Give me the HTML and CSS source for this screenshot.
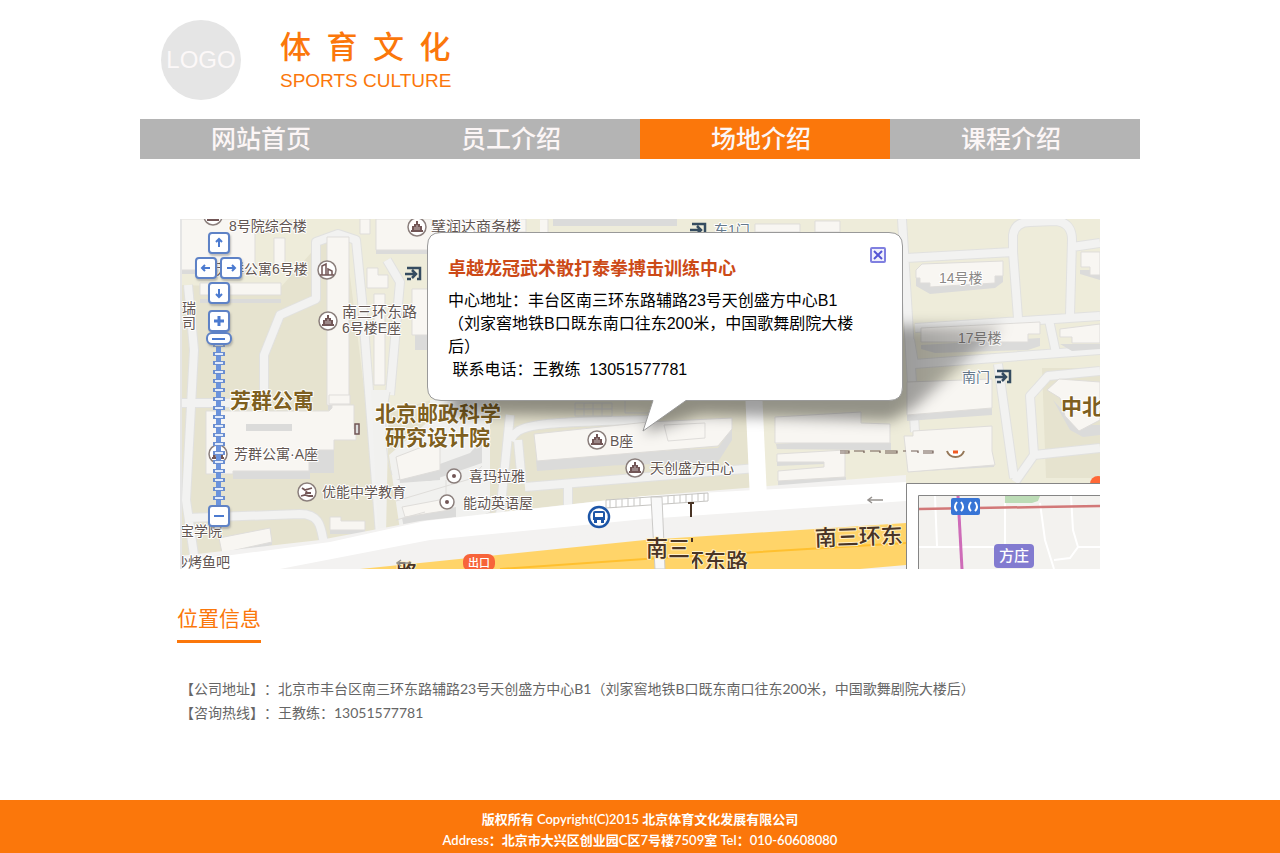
FILE: index.html
```html
<!DOCTYPE html>
<html lang="zh-CN">
<head>
<meta charset="utf-8">
<meta name="viewport" content="width=device-width, initial-scale=1">
<title>场地介绍 - 体育文化</title>
<link rel="stylesheet" href="styles.css">
</head>
<body>
<div class="container">
  <header class="header">
    <div class="logo">LOGO</div>
    <div class="brand">
      <h1 class="brand-name">体&ensp;育&ensp;文&ensp;化</h1>
      <p class="brand-sub">SPORTS CULTURE</p>
    </div>
  </header>
  <nav class="nav">
    <a class="nav-link" href="#">网站首页</a>
    <a class="nav-link" href="#">员工介绍</a>
    <a class="nav-link active" href="#" aria-current="page">场地介绍</a>
    <a class="nav-link" href="#">课程介绍</a>
  </nav>
  <main class="main">
    <section class="map">
      <svg class="map-canvas" viewBox="180 219 920 350" preserveAspectRatio="xMinYMin slice" aria-label="地图">
        <defs>
          <filter id="soft" x="-10%" y="-50%" width="120%" height="200%"><feGaussianBlur stdDeviation="7"/></filter>
          <linearGradient id="shade" x1="0" y1="0" x2="1" y2="0"><stop offset="0" stop-opacity=".38"/><stop offset=".8" stop-opacity=".38"/><stop offset="1" stop-opacity=".2"/></linearGradient>
          <clipPath id="tile"><rect x="692" y="545" width="80" height="30"/></clipPath>
          <g id="tower">
            <circle r="9" fill="#fff" stroke="#8b7f7c" stroke-width="1.5"/>
            <path d="M-6 5H6V3H5V-1H3V-3H1V-6H-1V-3H-3V-1H-5V3H-6Z" fill="#725656"/>
            <path d="M-2 0V3M0-2V3M2 0V3" stroke="#fff" stroke-width=".6"/>
          </g>
          <g id="spot"><circle r="7" fill="#fff" stroke="#8b7f7c" stroke-width="1.5"/><circle r="2" fill="#725656"/></g>
          <g id="gate" fill="none" stroke="#354c60" stroke-width="2.5"><path d="M-6-5H7V6H4M-8 1H2M-1-3L3 1L-1 5M-6 6H-2"/></g>
        </defs>
        <rect x="180" y="219" width="920" height="350" fill="#eeecda"/>
        <path d="M180 285L280 288L318 245L345 236L368 420L430 400H755L757 500L180 569Z" fill="#e6e3cf"/>
        <path d="M1042 368H1100V478H1046Z" fill="#e6e3cf"/>

        <g fill="none" stroke="#e1e1df" stroke-width="10" stroke-linejoin="round">
          <path d="M264 400V355L280 315L316 299V242L338 234L356 240L362 300L380 535"/>
          <path d="M387 260L400 282L390 395M180 403H250"/>
          <path d="M188 285L194 350L186 500L196 569M187 518L300 514C325 514 320 535 326 550"/>
          <path d="M510 415L498 535M510 440C518 425 530 422 650 420M518 440L522 484M525 487L757 468M568 486V520"/>
          <path d="M902 219L915 432M906 258L1013 252M915 328L1100 316M1013 252V235Q1015 222 1030 222L1055 221Q1072 222 1072 240L1070 315M1013 252L1018 318M1072 247L1100 243"/>
          <path d="M910 340L914 364L1100 350M1049 320L1056 353M998 364L1014 478M1100 371L1048 376L1030 396L1034 455L1015 482M1034 455L1100 448"/>
        </g>
        <g fill="none" stroke="#f2f2f1" stroke-width="8" stroke-linejoin="round">
          <path d="M264 400V355L280 315L316 299V242L338 234L356 240L362 300L380 535"/>
          <path d="M387 260L400 282L390 395M180 403H250"/>
          <path d="M188 285L194 350L186 500L196 569M187 518L300 514C325 514 320 535 326 550"/>
          <path d="M510 415L498 535M510 440C518 425 530 422 650 420M518 440L522 484M525 487L757 468M568 486V520"/>
          <path d="M902 219L915 432M906 258L1013 252M915 328L1100 316M1013 252V235Q1015 222 1030 222L1055 221Q1072 222 1072 240L1070 315M1013 252L1018 318M1072 247L1100 243"/>
          <path d="M910 340L914 364L1100 350M1049 320L1056 353M998 364L1014 478M1100 371L1048 376L1030 396L1034 455L1015 482M1034 455L1100 448"/>
        </g>
        <path d="M371 390L389 390L386 534L378 535ZM389 455L430 420V400H490V520L400 530Z" fill="#f1f1ef"/>
        <path d="M392 475C384 450 384 420 390 392" fill="none" stroke="#e1e1df"/>

        <g fill="#dbdbda">
          <path d="M182 225H254V274H182ZM376 230H430V254H376ZM200 303H281V299H200ZM206 445H334V473H206ZM233 470H310V479H233ZM328 410H350V405H328Z"/>
          <path d="M398 468L440 450V480L400 483ZM402 518L456 507V517L404 528ZM330 530H365V534H330ZM220 553L272 541V545L222 558ZM415 335H430V350H415Z"/>
          <path d="M396 480L470 453L482 440V463L430 481ZM536 460L690 449V460L537 471ZM596 455L718 448L732 428V440L718 462L596 466Z"/>
          <path d="M776 444L862 439L891 443V450L862 450L777 449ZM777 462L824 458V464L777 466ZM778 481L846 477V483L778 487Z"/>
          <path d="M916 278L1003 274V282L995 288L930 294L916 286ZM921 345L1040 338V346L1028 350L935 353L921 349ZM1060 344H1100V349L1072 351ZM1080 270H1100V280L1080 274Z"/>
          <path d="M907 415L992 408V415L907 421ZM908 462L994 457V467L908 472ZM1053 400L1070 430L1083 437L1100 435V425H1080L1072 420Z"/>
        </g>
        <g fill="#f8f6f2" stroke="#dfddda" stroke-width="1">
          <path d="M180 219H255V270H180ZM274 238H285V266H274ZM540 219H548V234H540M360 219H370V234H360ZM376 219H520V250H376ZM327 237H349V405H327ZM367 268H378V275H388V288H367ZM374 294H385V385H374ZM412 289H430V335H412ZM200 283H281V295H200Z"/>
          <path d="M206 411H329L332 408V405H354V429H356V440H334V450H309V471H233V474H206ZM329 395H350V404H329ZM396 457L440 440V470L400 480ZM402 507L450 498V510L405 517ZM330 517H341V521H365V530H330ZM219 538L270 528L272 542L222 553Z"/>
          <path d="M534 434L648 422L732 418V429L718 446L537 461ZM775 417L861 412V423L890 424V443L775 443ZM777 454L845 450V477L778 481V471L824 467V462H777Z"/>
          <path d="M916 270L922 264L1003 261V276H995V283L930 287V283H920V278H916ZM921 328L1040 322V334H1028V342H935V342H921ZM1060 329L1100 324V343H1072V337H1060ZM1081 252H1100V275H1090V267H1081Z"/>
          <path d="M907 382L992 379V408L907 415ZM904 436H913V431L992 426V451L995 465L908 472ZM1047 390L1059 379L1100 382V420L1079 431L1065 416L1060 398ZM432 219H526V232H432ZM755 224H800V232H755ZM815 221H840V232H815Z"/>
          <path d="M446 480V495M396 501L470 479L482 466M396 520L425 512M400 550L520 500M664 425L705 423V438L668 441Z" fill="none"/>
        </g>
        <path d="M246 424H292V431H246ZM553 219H677V226H553Z" fill="#dbdbda"/>

        <path d="M180 569V556L320 540L420 521L645 496L906 475V569Z" fill="#f3f2f1"/>
        <path d="M180 569V562L330 542L425 521L645 496L906 482V501L645 519L430 540L280 569Z" fill="#fff"/>
        <path d="M300 569L400 552L645 530L906 510V518L645 535L430 553L350 569Z" fill="#f3f2f1"/>
        <path d="M745 390H762L767 498L750 500Z" fill="#fff"/>
        <path d="M360 569L430 562L645 540L906 523V565L860 569Z" fill="#ffd469"/>
        <path d="M500 569L645 559L906 543" fill="none" stroke="#ffc02f" stroke-width="2"/>
        <path d="M606 505V500L708 493V501L606 508Z" fill="#fff" stroke="#c6c5c2"/>
        <path d="M610 500V508M616 500V508M622 499V507M628 499V507M634 498V506M640 498V506M668 496V504M674 495V503M680 495V503M686 494V502M692 494V502M698 493V501M704 493V501" stroke="#c6c5c2"/>
        <path d="M651 497H662L665 569H655Z" fill="#f8f8f8" stroke="#cbcac8"/>
        <path d="M575 403H612V416H575ZM625 400H665V413H625ZM575 409H612M584 403V416M593 403V416M602 403V416" fill="none" stroke="#d6d6d4"/>

        <g class="map-label">
          <text x="229" y="231" font-size="14">8号院综合楼</text>
          <text x="216" y="274" font-size="14">芳群公寓6号楼</text>
          <text x="431" y="232" font-size="15">擘润达商务楼</text>
          <text x="342" y="317" font-size="15">南三环东路</text>
          <text x="342" y="333" font-size="14">6号楼E座</text>
          <text x="182" y="313" font-size="14">瑞</text>
          <text x="182" y="328" font-size="14">司</text>
          <text x="234" y="459" font-size="14">芳群公寓·A座</text>
          <text x="322" y="497" font-size="14">优能中学教育</text>
          <text x="180" y="536" font-size="14">宝学院</text>
          <text x="174" y="567" font-size="14">沙烤鱼吧</text>
          <text x="469" y="481" font-size="14">喜玛拉雅</text>
          <text x="463" y="508" font-size="14">能动英语屋</text>
          <text x="610" y="446" font-size="14">B座</text>
          <text x="650" y="473" font-size="14">天创盛方中心</text>
          <text x="939" y="283" font-size="14" class="pale">14号楼</text>
          <text x="958" y="343" font-size="14" class="pale">17号楼</text>
          <text x="962" y="382" font-size="14" class="gate-label">南门</text>
          <text x="714" y="235" font-size="14" class="gate-label">东1门</text>
        </g>
        <g class="map-area">
          <text x="230" y="408" font-size="21">芳群公寓</text>
          <text x="375" y="421" font-size="21">北京邮政科学</text>
          <text x="385" y="445" font-size="21">研究设计院</text>
          <text x="1061" y="414" font-size="21">中北</text>
        </g>
        <g class="map-road">
          <text x="815" y="546" font-size="22" transform="rotate(-2 815 546)">南三环东</text>
          <text x="646" y="556" font-size="22">南三</text>
          <g clip-path="url(#tile)"><text x="682" y="569" font-size="22">环东路</text></g>
          <text x="396" y="580" font-size="22">路</text>
        </g>
        <path d="M691 503V517M688 503H694M692 538V542" stroke="#493425" stroke-width="2"/>
        <path d="M840 451h9v2h-9m14-2h10v2m6-2h10v2m5-2h12v2h-12m18-2h3m5 0h7v2m5-2h10v2h-10" fill="none" stroke="#725e56" stroke-width="1.200"/>
        <path d="M947 451A9 9 0 0 0 964 451" fill="#fff" stroke="#957758" stroke-width="2"/><path d="M953 452H958" stroke="#f05922" stroke-width="3"/>
        <use href="#tower" x="213" y="216"/><use href="#tower" x="417" y="227"/><use href="#tower" x="328" y="321"/>
        <use href="#tower" x="218" y="454"/><use href="#tower" x="597" y="440"/><use href="#tower" x="635" y="468"/>
        <g fill="none" stroke="#725656" stroke-width="1.5">
          <circle cx="327" cy="270" r="9" fill="#fff" stroke="#8b7f7c"/><path d="M322 275V266L326 264V275M328 275V269L332 271V275M320 275H334"/>
          <circle cx="307" cy="492" r="9" fill="#fff" stroke="#8b7f7c"/><path d="M302 488L305 490L312 488M307 489L306 493L311 493M301 496L305 495L309 496H313" stroke-width="1.800"/>
          <path d="M355 424H359V434H355Z" fill="#ddd"/>
        </g>
        <use href="#spot" x="454" y="476"/><use href="#spot" x="447" y="502"/>
        <use href="#gate" x="413" y="273"/><use href="#gate" x="1003" y="376"/><use href="#gate" x="698" y="229"/>
        <circle cx="599" cy="517" r="10" fill="#fff" stroke="#1c55a7" stroke-width="2.500"/>
        <path d="M595 511H603Q605 511 605 513V520H593V513Q593 511 595 511ZM594 520H597V523H594ZM601 520H604V523H601Z" fill="#1c55a7"/><path d="M595 513H603V517H595Z" fill="#fff"/>
        <rect x="463" y="554" width="32" height="17" rx="7" fill="#f7643a"/>
        <text x="468" y="567" font-size="11" class="white-label">出口</text>
        <path d="M883 500H868M872 497L868 500L872 503M411 563H397M401 560L397 563L401 566" fill="none" stroke="#96928f" stroke-width="1.5"/>
        <circle cx="1098" cy="484" r="8" fill="#ff6836"/>

        <path d="M906.500 571V483.500H1102V571Z" fill="#fff" stroke="#858585"/>
        <path d="M918.500 571V495.500H1102V571Z" fill="#f3f2ef" stroke="#858585"/>
        <path d="M1005 496H1040L1038 501L1032 503H1005Z" fill="#bcdcb6"/>
        <path d="M935 496L937 546M919 547H994M1005 503V544M1040 503L1045 540L1054 569M1071 496L1073 530L1078 547L1070 558L1054 560M1078 547H1100" fill="none" stroke="#fff" stroke-width="2"/>
        <path d="M919 509L1040 507L1100 506" fill="none" stroke="#d27878" stroke-width="2.500"/>
        <path d="M958 496L962 569" stroke="#ce6cb8" stroke-width="3"/>
        <rect x="951" y="498" width="29" height="17" rx="2" fill="#3875d6"/>
        <path d="M957 502Q953 507 957 511M961 502Q965 507 961 511M971 502Q967 507 971 511M975 502Q979 507 975 511" fill="none" stroke="#fff" stroke-width="2"/>
        <rect x="994" y="544" width="40" height="24" rx="4" fill="#827bd0"/>
        <text x="999" y="561" font-size="15" class="white-label">方庄</text>

        <path d="M450 390L880 326H1004L914 408L890 421L700 415L645 433L650 417L450 414Z" fill="url(#shade)" filter="url(#soft)"/>
        <path d="M441 232.500H889Q902.500 232.500 902.500 246V387Q902.500 400.500 889 400.500H686L643 431L653 400.500H441Q427.500 400.500 427.500 387V246Q427.500 232.500 441 232.500Z" fill="#fff" stroke="#999"/>
        <rect x="180" y="219" width="2" height="350" fill="#e5e5e5"/>
      </svg>

      <div class="controls">
        <button class="ctl" type="button" aria-label="向上"><svg viewBox="0 0 12 12"><path d="M6 10V3M3 5L6 2L9 5"/></svg></button>
        <div class="controls-row">
          <button class="ctl" type="button" aria-label="向左"><svg viewBox="0 0 12 12"><path d="M10 6H3M5 3L2 6L5 9"/></svg></button>
          <button class="ctl" type="button" aria-label="向右"><svg viewBox="0 0 12 12"><path d="M2 6H9M7 3L10 6L7 9"/></svg></button>
        </div>
        <button class="ctl" type="button" aria-label="向下"><svg viewBox="0 0 12 12"><path d="M6 2V9M3 7L6 10L9 7"/></svg></button>
        <div class="zoom">
          <button class="ctl" type="button" aria-label="放大"><svg viewBox="0 0 12 12"><path class="bold" d="M6 1V11M1 6H11"/></svg></button>
          <input class="zoom-range" type="range" min="0" max="18" value="0" aria-label="缩放级别">
          <button class="ctl" type="button" aria-label="缩小"><svg viewBox="0 0 12 12"><path d="M1 6H11"/></svg></button>
        </div>
      </div>

      <div class="popup">
        <button class="popup-close" type="button" aria-label="关闭"><svg viewBox="0 0 10 10"><path d="M1 1L9 9M9 1L1 9"/></svg></button>
        <h2 class="popup-title">卓越龙冠武术散打泰拳搏击训练中心</h2>
        <p class="popup-text">中心地址：丰台区南三环东路辅路23号天创盛方中心B1<br>（刘家窖地铁B口既东南口往东200米，中国歌舞剧院大楼<br>后）<br>&nbsp;联系电话：王教练&nbsp; 13051577781</p>
      </div>
    </section>

    <section class="info">
      <h2 class="info-title">位置信息</h2>
      <p class="info-text">【公司地址】：北京市丰台区南三环东路辅路23号天创盛方中心B1（刘家窖地铁B口既东南口往东200米，中国歌舞剧院大楼后）</p>
      <p class="info-text">【咨询热线】：王教练：13051577781</p>
    </section>
  </main>
</div>
<footer class="footer">
  <p>版权所有 Copyright(C)2015 北京体育文化发展有限公司</p>
  <p>Address：北京市大兴区创业园C区7号楼7509室 Tel：010-60608080</p>
</footer>
</body>
</html>
```
FILE: styles.css
```css
* {
  box-sizing: border-box;
}

body {
  display: flex;
  flex-direction: column;
  min-height: 100vh;
  margin: 0;
  background: #fff;
  font-family: "Liberation Sans", "Noto Sans CJK SC", sans-serif;
}

h1,
h2,
p {
  margin: 0;
}

.container {
  width: 100%;
  max-width: 1000px;
  margin: 0 auto;
}

.header {
  display: flex;
  gap: 39px;
  padding: 20px 21px 19px;
}

.logo {
  display: grid;
  place-items: center;
  width: 80px;
  height: 80px;
  border-radius: 50%;
  background: #e5e5e5;
  color: #fcf8f8;
  font-size: 24px;
}

.brand {
  padding-top: 8px;
  color: #fb770b;
}

.brand-name {
  font-size: 31px;
  font-weight: 500;
  line-height: 40px;
}

.brand-sub {
  font-size: 19px;
  line-height: 26px;
}

.nav {
  display: grid;
  grid-template-columns: repeat(4, 1fr);
  background: #b4b4b4;
}

.nav-link {
  padding-right: 8px;
  color: #fcf6f6;
  font-size: 25px;
  font-weight: 500;
  line-height: 40px;
  text-align: center;
  text-decoration: none;
}

.nav-link.active {
  background: #fb770b;
}

.main {
  padding: 60px 40px;
}

.map {
  position: relative;
  overflow: hidden;
}

.map-canvas {
  display: block;
  width: 100%;
  height: 350px;
}

.map-label text,
.map-area text,
.map-road text {
  paint-order: stroke;
  stroke: #fff;
  stroke-width: 2px;
  stroke-linejoin: round;
}

.map-label text {
  fill: #625652;
}

.map-label .pale {
  fill: #8c8987;
}

.map-label .gate-label {
  fill: #65798c;
}

.map-area text {
  fill: #7e5f20;
  font-weight: 700;
}

.map-road text {
  fill: #493425;
  stroke: #fff0c8;
  font-weight: 500;
}

.white-label {
  fill: #fff;
  font-weight: 500;
}

.controls {
  position: absolute;
  top: 13px;
  left: 15px;
  display: flex;
  flex-direction: column;
  align-items: center;
  gap: 3px;
}

.controls-row {
  display: flex;
  gap: 3px;
}

.ctl {
  display: grid;
  place-items: center;
  width: 22px;
  height: 22px;
  padding: 0;
  border: 2px solid #5e82c6;
  border-radius: 4px;
  background: #fff;
  box-shadow: 1px 2px 2px #8888;
}

.ctl svg {
  width: 12px;
  height: 12px;
  fill: none;
  stroke: #4b7ad0;
  stroke-width: 2;
}

.ctl .bold {
  stroke-width: 3;
}

.zoom {
  display: flex;
  flex-direction: column;
  align-items: center;
  padding-top: 3px;
}

.zoom-range {
  width: 26px;
  height: 173px;
  margin: 0;
  appearance: none;
  background: none;
  writing-mode: vertical-lr;
}

.zoom-range::-webkit-slider-runnable-track {
  width: 26px;
  height: 173px;
  background:
    repeating-linear-gradient(#0000 0 3px, #e3ecfb 3px 5px, #0000 5px 9px) center / 8px 100% no-repeat,
    repeating-linear-gradient(#0000 0 2px, #6b8ed0 2px 6px, #0000 6px 9px) center / 12px 100% no-repeat,
    linear-gradient(#6b93dc, #6b93dc) center / 5px 100% no-repeat;
}

.zoom-range::-webkit-slider-thumb {
  width: 26px;
  height: 13px;
  appearance: none;
  border: 2px solid #5e82c6;
  border-radius: 6px;
  background: linear-gradient(#4b7ad0, #4b7ad0) center / 13px 2px no-repeat #fff;
  box-shadow: 1px 2px 2px #8888;
}

.popup {
  position: absolute;
  top: 13px;
  left: 247px;
  width: 476px;
  padding: 25px 21px;
  color: #000;
}

.popup-close {
  position: absolute;
  top: 15px;
  right: 17px;
  display: grid;
  place-items: center;
  width: 16px;
  height: 16px;
  padding: 0;
  border: 2px solid #8080e0;
  border-radius: 2px;
  background: #f0f0fc;
}

.popup-close svg {
  width: 10px;
  height: 10px;
  fill: none;
  stroke: #5454d4;
  stroke-width: 2;
}

.popup-title {
  margin-bottom: 8px;
  color: #cc4a17;
  font-size: 18px;
  font-weight: 700;
  line-height: 24px;
}

.popup-text {
  font-size: 16px;
  line-height: 23px;
  white-space: nowrap;
}

.info {
  padding-top: 34px;
}

.info-title {
  width: max-content;
  margin: 0 0 34px -3px;
  padding-bottom: 5px;
  border-bottom: 3px solid #fb770b;
  color: #fb770b;
  font-size: 21px;
  font-weight: 400;
  line-height: 32px;
}

.info-text {
  color: #666;
  font-family: Lato, "Noto Sans CJK SC", sans-serif;
  font-size: 14px;
  font-weight: 400;
  line-height: 24px;
  text-spacing-trim: space-all;
}

.footer {
  margin-top: auto;
  padding: 9px 0 2px;
  background: #fb770b;
  color: #fff;
  font-family: Lato, "Noto Sans CJK SC", sans-serif;
  font-size: 13px;
  font-weight: 600;
  line-height: 21px;
  text-align: center;
}
```
